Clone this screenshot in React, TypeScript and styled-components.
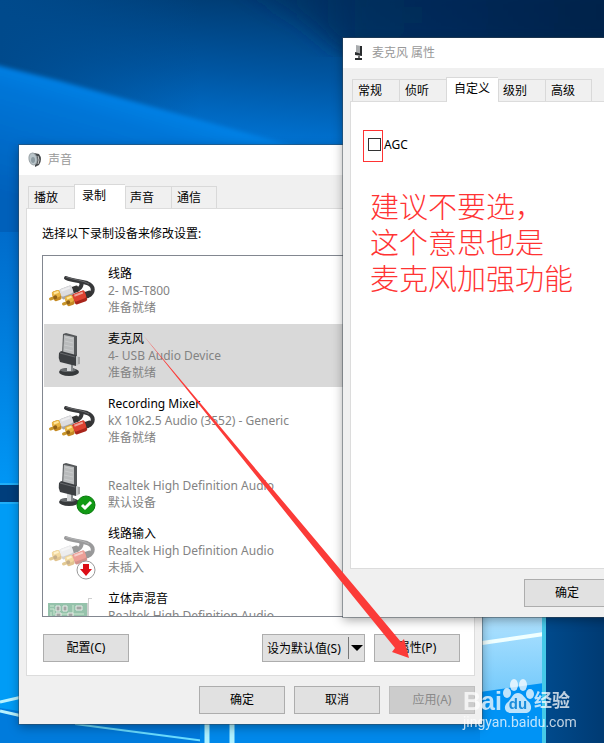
import React, { useState } from "react";
import styled, { createGlobalStyle } from "styled-components";

const GlobalStyle = createGlobalStyle`
  * { box-sizing: border-box; }
  body { margin: 0; }
  body, button, input {
    font-family: "Noto Sans", "Noto Sans CJK SC", sans-serif;
    font-size: 12px;
    color: #000;
  }
`;

const Desktop = styled.main`
  position: relative;
  min-height: 100vh;
  overflow: hidden;
  background: #0078dc;
`;

const Wallpaper = styled.svg`
  position: absolute;
  inset: 0;
  width: 100%;
  height: 100%;
`;

const Window = styled.section<{ $left: number; $top: number }>`
  position: absolute;
  left: ${(p) => p.$left}px;
  top: ${(p) => p.$top}px;
  width: 463px;
  background: #f0f0f0;
  box-shadow: 0 0 0 1px rgba(60, 70, 80, 0.45), 0 3px 10px rgba(0, 0, 0, 0.35);
`;

const TitleBar = styled.header`
  display: flex;
  align-items: center;
  gap: 5px;
  height: 30px;
  padding: 0 8px;
  background: #fff;
`;

const Title = styled.h1`
  margin: 0;
  font-size: 12px;
  font-weight: 400;
  line-height: 18px;
  color: #999;
`;

const Body = styled.div`
  padding: 9px 7px 10px;
`;

const TabList = styled.div`
  display: flex;
  align-items: flex-end;
  padding-left: 2px;
`;

const Tab = styled.button<{ $active: boolean; $width: number }>`
  position: relative;
  z-index: ${(p) => (p.$active ? 1 : 0)};
  width: ${(p) => p.$width + (p.$active ? 5 : 0)}px;
  height: ${(p) => (p.$active ? 25 : 22)}px;
  margin-bottom: ${(p) => (p.$active ? -1 : 0)}px;
  padding: ${(p) => (p.$active ? "0 0 3px 7px" : "0 0 0 5px")};
  text-align: left;
  line-height: 18px;
  white-space: nowrap;
  border: solid #d9d9d9;
  border-width: 1px 0 0 1px;
  background: ${(p) => (p.$active ? "#fff" : "#f0f0f0")};
  &[aria-selected="true"] + & { padding-left: 4px; }
  &:last-child { border-right-width: 1px; }
`;

const Panel = styled.div`
  border: 1px solid #dcdcdc;
  background: #fff;
`;

const SoundPanel = styled(Panel)`
  padding: 16px 13px 13px 15px;
`;

const PropertiesPanel = styled(Panel)`
  min-height: 468px;
  padding: 28px 12px;
`;

const Prompt = styled.p`
  margin: 0 0 12px;
  line-height: 18px;
`;

const DeviceList = styled.ul`
  height: 362px;
  margin: 0;
  padding: 3px 1px 0;
  overflow: hidden;
  list-style: none;
  border: 1px solid #828790;
`;

const Device = styled.li<{ $selected: boolean }>`
  display: flex;
  gap: 12px;
  height: 63px;
  margin-bottom: 2px;
  padding-left: 2px;
  background: ${(p) => (p.$selected ? "#d9d9d9" : "#fff")};
`;

const DeviceIcon = styled.svg`
  flex: none;
  width: 50px;
  height: 62px;
`;

const DeviceText = styled.div`
  padding-top: 6px;
  color: #838383;
`;

const Line = styled.div<{ $name?: boolean }>`
  height: 17px;
  line-height: 17px;
  white-space: nowrap;
  ${(p) => p.$name && "color: #000;"}
`;

const ButtonRow = styled.div`
  display: flex;
  gap: 9px;
`;

const DeviceActions = styled(ButtonRow)`
  margin-top: 17px;
  padding: 0 1px;
`;

const DialogActions = styled(ButtonRow)`
  justify-content: flex-end;
  margin-top: 10px;
`;

const PropertyActions = styled(ButtonRow)`
  margin-top: 10px;
  padding-left: 174px;
`;

const Button = styled.button`
  width: 86px;
  height: 28px;
  padding: 0;
  line-height: 18px;
  border: 1px solid #adadad;
  background: #e1e1e1;
  &:disabled {
    color: #8a8a8a;
    border-color: #bfbfbf;
    background: #ccc;
  }
`;

const SplitButton = styled.div`
  display: flex;
  align-items: center;
  width: 103px;
  height: 28px;
  margin-left: auto;
  border: 1px solid #adadad;
  background: #e1e1e1;
`;

const SplitMain = styled.button`
  flex: 1;
  height: 22px;
  padding: 0 0 0 4px;
  text-align: left;
  white-space: nowrap;
  border: 0;
  border-right: 1px solid #777;
  background: none;
`;

const SplitMenu = styled.button`
  display: flex;
  align-items: center;
  justify-content: center;
  width: 15px;
  height: 22px;
  padding: 0;
  border: 0;
  background: none;
`;

const CheckLabel = styled.label`
  display: flex;
  align-items: center;
  line-height: 18px;
`;

const Highlight = styled.span`
  display: flex;
  align-items: center;
  justify-content: center;
  width: 20px;
  height: 32px;
  border: 1px solid #f33;
`;

const LabelText = styled.span`
  padding: 0 0 3px 1px;
`;

const CheckBox = styled.input`
  appearance: none;
  width: 13px;
  height: 13px;
  margin: 0 0 3px 2px;
  border: 1px solid #333;
  background: #fff;
  &:checked { background: #333; }
`;

const Note = styled.p`
  margin: 25px 0 0 7px;
  font-family: "Noto Sans CJK SC", sans-serif;
  font-size: 29px;
  font-weight: 300;
  line-height: 36px;
  color: #ff3333;
`;

const Arrow = styled.svg`
  position: absolute;
  left: 140px;
  top: 330px;
  width: 280px;
  height: 335px;
  pointer-events: none;
`;

const Watermark = styled.div`
  position: absolute;
  left: 463px;
  top: 678px;
  color: #fff;
  opacity: 0.75;
`;

const Brand = styled.div`
  display: flex;
  align-items: flex-end;
  height: 36px;
  font-family: "Liberation Sans", "Noto Sans CJK SC", sans-serif;
  font-size: 25px;
  font-weight: 700;
  line-height: 26px;
`;

const BrandCn = styled.span`
  font-size: 18px;
`;

const Site = styled.div`
  font-family: Roboto, sans-serif;
  font-size: 14px;
  line-height: 16px;
`;

function WallpaperArt() {
  return (
    <Wallpaper viewBox="0 0 604 743" preserveAspectRatio="none" aria-hidden="true">
      <defs>
        <linearGradient id="sky" x1="0.7" y1="0" x2="0.5" y2="1">
          <stop offset="0" stopColor="#00386c" />
          <stop offset="0.35" stopColor="#0056a2" />
          <stop offset="0.65" stopColor="#0076d8" />
        </linearGradient>
        <linearGradient id="topdark" x1="0" y1="0" x2="1" y2="0">
          <stop offset="0" stopColor="#00285a" stopOpacity="0" />
          <stop offset="0.35" stopColor="#002a58" stopOpacity="0.8" />
          <stop offset="1" stopColor="#001f48" />
        </linearGradient>
        <linearGradient id="leftdark" x1="0" y1="0" x2="1" y2="0">
          <stop offset="0" stopColor="#004a8c" />
          <stop offset="1" stopColor="#004a8c" stopOpacity="0" />
        </linearGradient>
        <linearGradient id="beam" gradientUnits="userSpaceOnUse" x1="170" y1="100" x2="130" y2="235">
          <stop offset="0" stopColor="#0086ec" />
          <stop offset="0.25" stopColor="#0076d8" />
          <stop offset="1" stopColor="#0060ba" />
        </linearGradient>
        <linearGradient id="left" x1="0" y1="0" x2="0" y2="1">
          <stop offset="0" stopColor="#006ccb" />
          <stop offset="1" stopColor="#0096f5" />
        </linearGradient>
        <linearGradient id="pane" x1="0" y1="0" x2="0" y2="1">
          <stop offset="0" stopColor="#b4e4ff" />
          <stop offset="1" stopColor="#70c8fb" />
        </linearGradient>
        <linearGradient id="navy" x1="0" y1="0" x2="1" y2="0">
          <stop offset="0" stopColor="#004a8c" />
          <stop offset="1" stopColor="#003a72" />
        </linearGradient>
        <filter id="haze"><feGaussianBlur stdDeviation="10" /></filter>
        <filter id="soft"><feGaussianBlur stdDeviation="2" /></filter>
      </defs>
      <rect width="604" height="240" fill="url(#sky)" />
      <rect width="200" height="160" fill="url(#leftdark)" />
      <path d="M220 -20H624V50H340L300 20Z" fill="url(#topdark)" filter="url(#haze)" />
      <path d="M-8 64L60 81L300 148V260H-8Z" fill="url(#beam)" filter="url(#soft)" />
      <rect y="232" width="30" height="252" fill="url(#left)" />
      <rect y="484" width="30" height="18" fill="#003e7c" />
      <rect y="502" width="30" height="241" fill="#009cf6" />
      <path d="M0 484H20M0 503H20" stroke="#20aef8" strokeWidth="2" />
      <path d="M0 708L220 743H0Z" fill="#007bdc" />
      <path d="M0 702L22 697M0 711L22 716" stroke="#b8f2ff" strokeWidth="3" />
      <path d="M75 724L205 741" stroke="#6bdcff" strokeWidth="2" />
      <path d="M200 724H560V743H200Z" fill="#0088ea" />
      <path d="M207 720V743M232 720V743" stroke="#aef1ff" strokeWidth="5" />
      <rect x="480" y="610" width="64" height="90" fill="url(#pane)" />
      <path d="M480 692L544 683V743H480Z" fill="#0093f5" />
      <path d="M482 643L544 634" stroke="#f0ffff" strokeWidth="4" />
      <rect x="546" y="600" width="60" height="143" fill="url(#navy)" />
      <path d="M544 610V743" stroke="#45c9e8" strokeWidth="4" />
    </Wallpaper>
  );
}

function Plug({ x, y, color, edge }: { x: number; y: number; color: string; edge: string }) {
  return (
    <g transform={`translate(${x} ${y}) rotate(-20)`}>
      <rect x="19" y="-3" width="8" height="6" rx="2" fill="#333" />
      <rect x="8" y="-5" width="13" height="11" rx="2" fill={edge} />
      <rect x="8" y="-5" width="13" height="8" rx="2" fill={color} />
      <path d="M10 -3H19" stroke="#fff" strokeOpacity="0.5" strokeWidth="2" />
      <rect x="0" y="-5" width="8" height="10" rx="2" fill="#c58a22" />
      <rect x="0" y="-5" width="8" height="7" rx="2" fill="#e8b444" />
      <path d="M2 -3H7" stroke="#ffe79c" strokeWidth="2" />
      <path d="M-3 1H1" stroke="#c9962c" strokeWidth="3" strokeLinecap="round" />
      <circle cx="2" cy="1" r="2" fill="#8d6018" />
    </g>
  );
}

function CableArt({ faded }: { faded?: boolean }) {
  return (
    <g opacity={faded ? 0.5 : 1}>
      <path d="M20 19C27 22 35 22 41 24C49 27 48 34 42 37L36 38M35 23C37 27 33 31 28 32" fill="none" stroke="#37383a" strokeWidth="4" strokeLinecap="round" />
      <path d="M20 18C28 21 37 21 43 25" fill="none" stroke="#66686b" strokeWidth="1" />
      <Plug x={7} y={38} color="#dcdcdf" edge="#a4a4a8" />
      <Plug x={20} y={43} color="#dd4231" edge="#a8241a" />
    </g>
  );
}

function MicArt() {
  return (
    <g>
      <ellipse cx="23" cy="48" rx="10" ry="4" fill="#36393b" />
      <ellipse cx="22" cy="46" rx="8" ry="2" fill="#686c6f" />
      <path d="M21 38H26V47H21Z" fill="#d5d7d8" />
      <path d="M25 38H27V47H25Z" fill="#85898b" />
      <path d="M17 10L20 9L31 12V34L16 31Z" fill="#55585a" />
      <path d="M18 11L28 13V33L17 31Z" fill="#b9bbbc" />
      <path d="M19 13L27 15M19 17L27 19M18 21L27 23M18 25L27 27" stroke="#c9cbcc" strokeWidth="1" />
      <path d="M13 29L15 27L30 31V42L14 38Q12 34 13 29Z" fill="#3c3f42" />
      <path d="M14 29L29 33" stroke="#67696c" strokeWidth="1" />
      <path d="M30 32L34 33V40L30 42Z" fill="#c2c5c6" />
      <path d="M33 33V40" stroke="#888" strokeWidth="1" />
    </g>
  );
}

function CardArt() {
  return (
    <g opacity="0.55">
      <path d="M42 19V14H46V15H43V62H41V19Z" fill="#a9abab" />
      <rect x="2" y="19" width="39" height="30" fill="#3f9167" />
      <path d="M4 22H8M4 25H8V31M12 30H38M27 21V29M5 28V34" stroke="#a7d7ad" strokeWidth="1" fill="none" />
      <path d="M10 22h4v5h-4zM17 22h4v5h-4zM30 22h6v4h-6zM10 29h5v4h-5zM22 29h5v4h-5z" fill="#575c59" stroke="#d6ded8" />
    </g>
  );
}

function StatusBadge({ kind }: { kind: "ok" | "unplugged" }) {
  if (kind === "ok") {
    return (
      <g>
        <circle cx="40" cy="51" r="9" fill="#119a14" stroke="#087a0d" />
        <path d="M36 51L39 54L45 48" fill="none" stroke="#fff" strokeWidth="3" />
      </g>
    );
  }
  return (
    <g>
      <circle cx="40" cy="51" r="9" fill="#fff" stroke="#999" />
      <path d="M37 45H43V50H46L40 57L34 50H37Z" fill="#dc0d16" />
    </g>
  );
}

type DeviceInfo = {
  name: string;
  driver: string;
  status: string;
  icon: "cable" | "mic" | "card";
  badge?: "ok" | "unplugged";
};

const devices: DeviceInfo[] = [
  { name: "线路", driver: "2- MS-T800", status: "准备就绪", icon: "cable" },
  { name: "麦克风", driver: "4- USB Audio Device", status: "准备就绪", icon: "mic" },
  { name: "Recording Mixer", driver: "kX 10k2.5 Audio (3552) - Generic", status: "准备就绪", icon: "cable" },
  { name: "", driver: "Realtek High Definition Audio", status: "默认设备", icon: "mic", badge: "ok" },
  { name: "线路输入", driver: "Realtek High Definition Audio", status: "未插入", icon: "cable", badge: "unplugged" },
  { name: "立体声混音", driver: "Realtek High Definition Audio", status: "", icon: "card" },
];

function Tabs({ names, initial, width }: { names: string[]; initial: number; width: number }) {
  const [active, setActive] = useState(initial);
  return (
    <TabList role="tablist">
      {names.map((name, i) => (
        <Tab key={name} role="tab" aria-selected={i === active} $active={i === active} $width={width} onClick={() => setActive(i)}>
          {name}
        </Tab>
      ))}
    </TabList>
  );
}

function SoundWindow() {
  const [selected, setSelected] = useState(1);
  return (
    <Window $left={19} $top={145} aria-label="声音">
      <TitleBar>
        <svg width="16" height="16" viewBox="0 0 16 16" aria-hidden="true">
          <path d="M7 1L12 2Q16 7 12 13L8 15Z" fill="#45494c" />
          <path d="M11 4Q13 8 11 12" fill="none" stroke="#ccc" />
          <ellipse cx="6" cy="7" rx="4" ry="6" fill="#b9c4c9" stroke="#98a1a5" transform="rotate(-12 6 7)" />
          <ellipse cx="6" cy="8" rx="2" ry="3" fill="#8c9ba2" />
        </svg>
        <Title>声音</Title>
      </TitleBar>
      <Body>
        <Tabs names={["播放", "录制", "声音", "通信"]} initial={1} width={46} />
        <SoundPanel role="tabpanel">
          <Prompt>选择以下录制设备来修改设置:</Prompt>
          <DeviceList>
            {devices.map((d, i) => (
              <Device key={i} $selected={i === selected} onClick={() => setSelected(i)}>
                <DeviceIcon viewBox="0 0 50 62" aria-hidden="true">
                  {d.icon === "cable" && <CableArt faded={d.badge === "unplugged"} />}
                  {d.icon === "mic" && <MicArt />}
                  {d.icon === "card" && <CardArt />}
                  {d.badge && <StatusBadge kind={d.badge} />}
                </DeviceIcon>
                <DeviceText>
                  <Line $name>{d.name}</Line>
                  <Line>{d.driver}</Line>
                  <Line>{d.status}</Line>
                </DeviceText>
              </Device>
            ))}
          </DeviceList>
          <DeviceActions>
            <Button>配置(C)</Button>
            <SplitButton>
              <SplitMain>设为默认值(S)</SplitMain>
              <SplitMenu aria-label="默认值选项">
                <svg width="12" height="6" viewBox="0 0 12 6" aria-hidden="true"><path d="M0 0H12L6 6Z" /></svg>
              </SplitMenu>
            </SplitButton>
            <Button>属性(P)</Button>
          </DeviceActions>
        </SoundPanel>
        <DialogActions>
          <Button>确定</Button>
          <Button>取消</Button>
          <Button disabled>应用(A)</Button>
        </DialogActions>
      </Body>
    </Window>
  );
}

function PropertiesWindow() {
  return (
    <Window $left={343} $top={38} aria-label="麦克风 属性">
      <TitleBar>
        <svg width="16" height="16" viewBox="0 0 16 16" aria-hidden="true">
          <path d="M5 0L10 1V9L5 8Z" fill="#a9acae" />
          <path d="M9 1H11V10H9ZM4 7L11 9V11L4 10ZM4 13H11V15H4Z" fill="#292c2e" />
          <path d="M7 11H9V13H7Z" fill="#777" />
        </svg>
        <Title>麦克风 属性</Title>
      </TitleBar>
      <Body>
        <Tabs names={["常规", "侦听", "自定义", "级别", "高级"]} initial={2} width={47} />
        <PropertiesPanel role="tabpanel">
          <CheckLabel>
            <Highlight><CheckBox type="checkbox" /></Highlight>
            <LabelText>AGC</LabelText>
          </CheckLabel>
          <Note>
            建议不要选，<br />
            这个意思也是<br />
            麦克风加强功能
          </Note>
        </PropertiesPanel>
        <PropertyActions>
          <Button>确定</Button>
        </PropertyActions>
      </Body>
    </Window>
  );
}

export default function App() {
  return (
    <Desktop>
      <GlobalStyle />
      <WallpaperArt />
      <SoundWindow />
      <PropertiesWindow />
      <Arrow viewBox="0 0 280 335" aria-hidden="true">
        <path d="M3 5L226 270L261 312L264 309L269 328L252 322L255 318L216 270Z" fill="#fb3b38" />
      </Arrow>
      <Watermark>
        <Brand>
          <span>Bai</span>
          <svg width="32" height="36" viewBox="0 0 32 36" aria-hidden="true">
            <g fill="#fff">
              <ellipse cx="5" cy="15" rx="4" ry="5" />
              <ellipse cx="12" cy="7" rx="4" ry="6" />
              <ellipse cx="21" cy="7" rx="4" ry="6" />
              <ellipse cx="28" cy="16" rx="4" ry="5" />
              <path d="M16 15C21 15 23 21 27 24C31 29 29 35 23 35H9C2 35 1 28 6 24C10 20 11 15 16 15Z" />
            </g>
            <text x="16" y="31" textAnchor="middle" fontSize="15" fontWeight="700" fill="#258bd2">du</text>
          </svg>
          <BrandCn>经验</BrandCn>
        </Brand>
        <Site>jingyan.baidu.com</Site>
      </Watermark>
    </Desktop>
  );
}
